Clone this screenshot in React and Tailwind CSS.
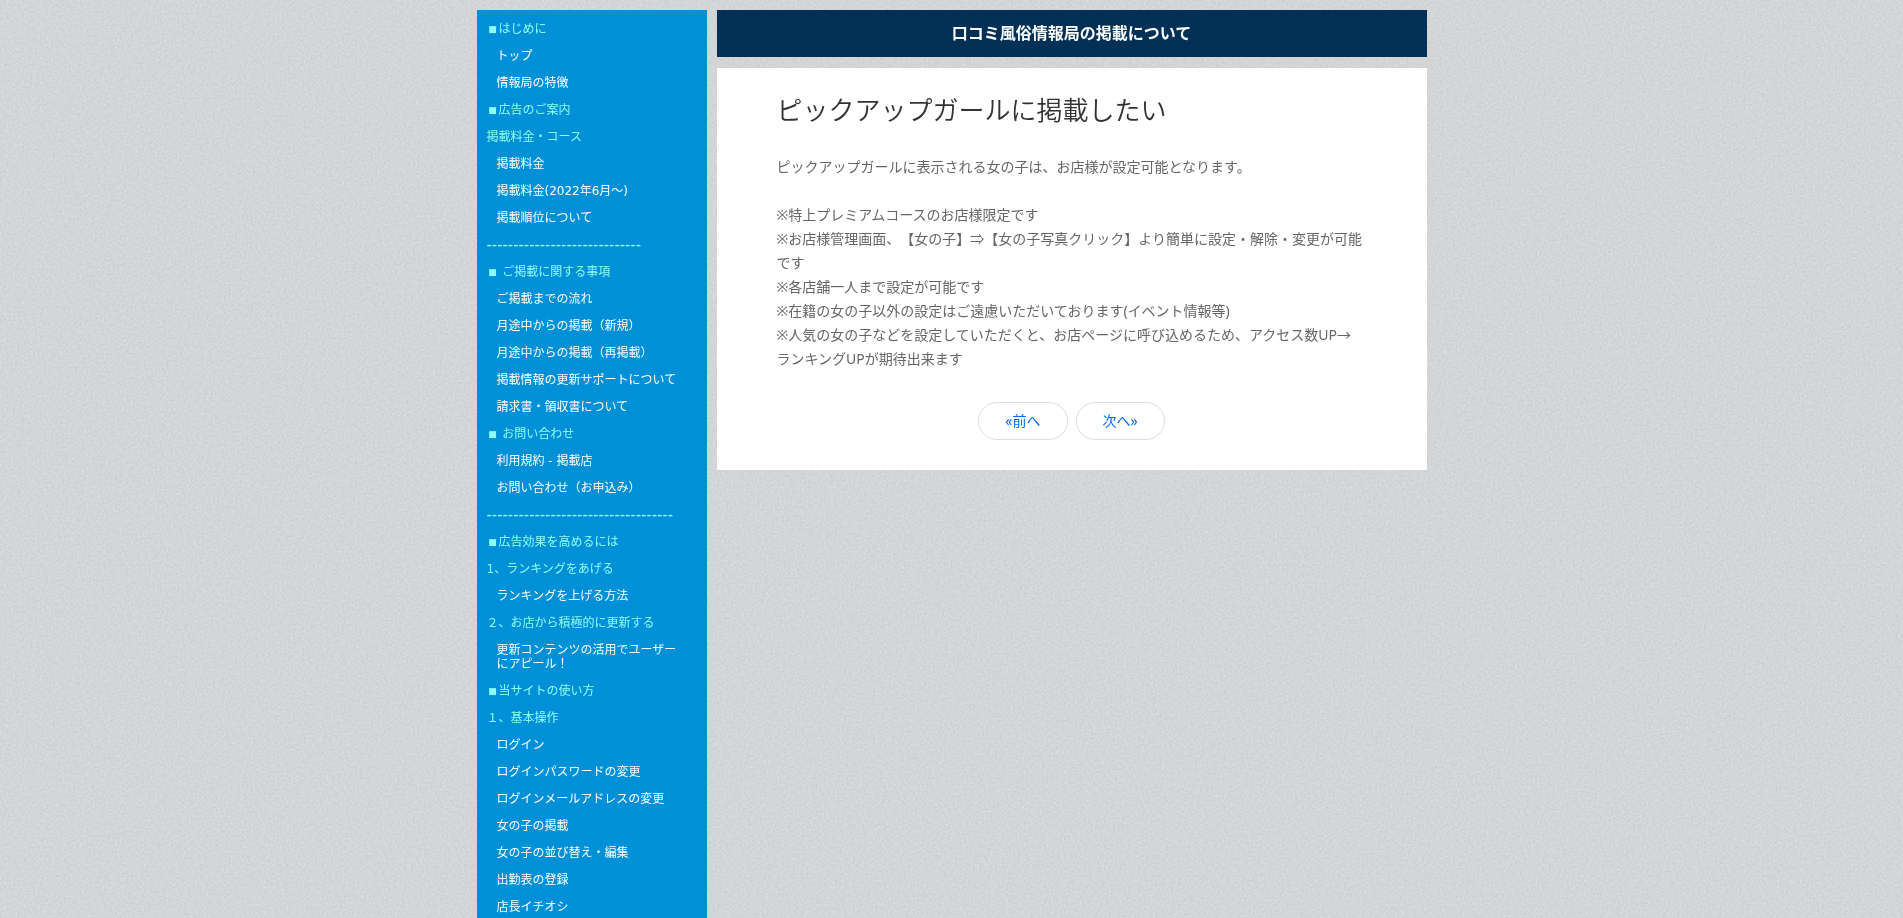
const MENU = [
  { label: 'はじめに', heading: true, marker: true },
  { label: 'トップ' },
  { label: '情報局の特徴' },
  { label: '広告のご案内', heading: true, marker: true },
  { label: '掲載料金・コース', heading: true },
  { label: '掲載料金' },
  { label: '掲載料金(2022年6月～)' },
  { label: '掲載順位について' },
  { label: '-----------------------------', rule: true },
  { label: ' ご掲載に関する事項', heading: true, marker: true },
  { label: 'ご掲載までの流れ' },
  { label: '月途中からの掲載（新規）' },
  { label: '月途中からの掲載（再掲載）' },
  { label: '掲載情報の更新サポートについて' },
  { label: '請求書・領収書について' },
  { label: ' お問い合わせ', heading: true, marker: true },
  { label: '利用規約 - 掲載店' },
  { label: 'お問い合わせ（お申込み）' },
  { label: '-----------------------------------', rule: true },
  { label: '広告効果を高めるには', heading: true, marker: true },
  { label: '1、ランキングをあげる', heading: true },
  { label: 'ランキングを上げる方法' },
  { label: '２、お店から積極的に更新する', heading: true },
  { label: '更新コンテンツの活用でユーザーにアピール！' },
  { label: '当サイトの使い方', heading: true, marker: true },
  { label: '１、基本操作', heading: true },
  { label: 'ログイン' },
  { label: 'ログインパスワードの変更' },
  { label: 'ログインメールアドレスの変更' },
  { label: '女の子の掲載' },
  { label: '女の子の並び替え・編集' },
  { label: '出勤表の登録' },
  { label: '店長イチオシ' },
];

const NOTES = [
  '※特上プレミアムコースのお店様限定です',
  '※お店様管理画面、【女の子】⇒【女の子写真クリック】より簡単に設定・解除・変更が可能です',
  '※各店舗一人まで設定が可能です',
  '※在籍の女の子以外の設定はご遠慮いただいております(イベント情報等)',
  '※人気の女の子などを設定していただくと、お店ページに呼び込めるため、アクセス数UP→\nランキングUPが期待出来ます',
];

function PaperTexture() {
  return (
    <svg className="fixed inset-0 -z-10 h-full w-full" aria-hidden="true">
      <filter id="paper" x="0" y="0" width="100%" height="100%" colorInterpolationFilters="sRGB">
        <feTurbulence type="fractalNoise" baseFrequency="0.45" numOctaves="3" seed="4" />
        <feColorMatrix values="0.1 0 0 0 0.777  0.1 0 0 0 0.783  0.1 0 0 0 0.791  0 0 0 0 1" />
      </filter>
      <rect width="100%" height="100%" fill="#d3d5d7" filter="url(#paper)" />
    </svg>
  );
}

function MenuItem({ item }) {
  if (item.rule) {
    return (
      <li className="px-2.5 py-1.5 font-['Liberation_Sans',sans-serif] text-[16px] leading-[14px] whitespace-nowrap text-[#8ffff5]">
        {item.label}
      </li>
    );
  }
  if (item.heading) {
    return (
      <li className="flex items-center px-2.5 py-1.5 whitespace-pre text-[#8ffff5]">
        {item.marker && <span className="w-3 text-center text-[9px]">■</span>}
        {item.label}
      </li>
    );
  }
  return (
    <li className="px-5 py-1.5 text-white">
      <a href="#" className="block hover:underline">
        {item.label}
      </a>
    </li>
  );
}

function Sidebar() {
  return (
    <nav className="w-[230px] shrink-0 bg-[#0090d7] py-1.5 font-['DejaVu_Sans','Noto_Sans_CJK_JP',sans-serif] text-[12px] leading-[14px]">
      <ul className="flex flex-col gap-px">
        {MENU.map((item) => (
          <MenuItem key={item.label} item={item} />
        ))}
      </ul>
    </nav>
  );
}

function PagerLink({ children }) {
  return (
    <a
      href="#"
      className="rounded-[20px] border border-[#dddddd] px-[26px] py-1.5 text-[#0068ff] hover:bg-gray-50"
    >
      {children}
    </a>
  );
}

export default function App() {
  return (
    <div
      lang="ja"
      className="relative isolate h-screen overflow-hidden bg-[#d3d5d7] pt-2.5 font-['Noto_Sans','Noto_Sans_CJK_JP',sans-serif] [text-spacing-trim:space-all]"
    >
      <PaperTexture />
      <div className="mx-auto flex max-w-[950px] items-start gap-2.5">
        <Sidebar />
        <main className="min-w-0 flex-1">
          <h1 className="bg-[#003055] py-3 text-center text-[16px] leading-[23px] font-bold text-white">
            口コミ風俗情報局の掲載について
          </h1>
          <article className="mt-[11px] bg-white px-[60px] py-[30px] text-[14px] leading-6 text-[#666666]">
            <h2 className="mb-[33px] text-[26px] leading-6 font-[350] text-[#333333]">
              ピックアップガールに掲載したい
            </h2>
            <p className="mb-6">
              ピックアップガールに表示される女の子は、お店様が設定可能となります。
            </p>
            {NOTES.map((note) => (
              <p key={note} className="whitespace-pre-line">
                {note}
              </p>
            ))}
            <div className="mt-[31px] flex justify-center gap-2">
              <PagerLink>«前へ</PagerLink>
              <PagerLink>次へ»</PagerLink>
            </div>
          </article>
        </main>
      </div>
    </div>
  );
}
